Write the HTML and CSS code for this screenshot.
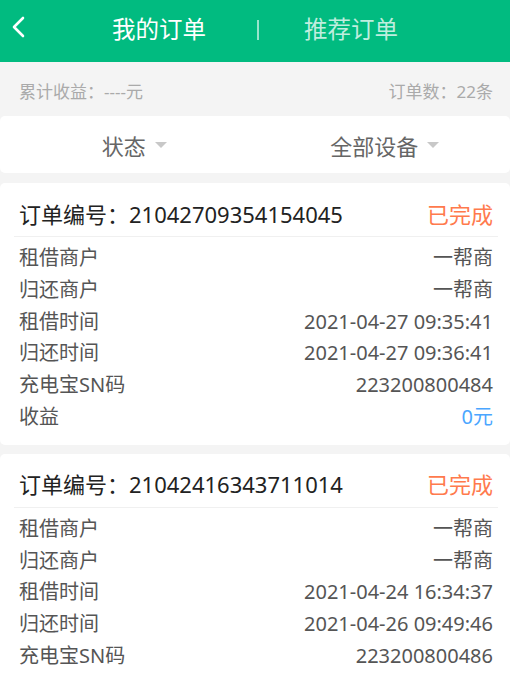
FILE: index.html
```html
<!DOCTYPE html>
<html lang="zh-CN">
<head>
    <meta charset="UTF-8">
    <meta name="viewport" content="width=device-width, initial-scale=1.0">
    <title>我的订单</title>
    <link rel="stylesheet" href="styles.css">
</head>
<body>
    <div class="header">
        <svg class="back" width="14" height="22" viewBox="0 0 14 22">
            <polyline points="11,2 2,11 11,20" fill="none" stroke="#fff" stroke-width="2.6" stroke-linecap="round" stroke-linejoin="round"/>
        </svg>
        <div class="tabs">
            <span class="tab active">我的订单</span>
            <span class="sep"></span>
            <span class="tab">推荐订单</span>
        </div>
    </div>

    <div class="stats">
        <span>累计收益：----元</span>
        <span>订单数：22条</span>
    </div>

    <div class="filters">
        <div class="filter">状态<i class="caret"></i></div>
        <div class="filter">全部设备<i class="caret"></i></div>
    </div>

    <div class="card">
        <div class="card-head">
            <span class="order-no">订单编号：21042709354154045</span>
            <span class="status">已完成</span>
        </div>
        <div class="rows">
            <div class="row"><span>租借商户</span><span>一帮商</span></div>
            <div class="row"><span>归还商户</span><span>一帮商</span></div>
            <div class="row"><span>租借时间</span><span>2021-04-27 09:35:41</span></div>
            <div class="row"><span>归还时间</span><span>2021-04-27 09:36:41</span></div>
            <div class="row"><span>充电宝SN码</span><span>223200800484</span></div>
            <div class="row"><span>收益</span><span class="income">0元</span></div>
        </div>
    </div>

    <div class="card">
        <div class="card-head">
            <span class="order-no">订单编号：21042416343711014</span>
            <span class="status">已完成</span>
        </div>
        <div class="rows">
            <div class="row"><span>租借商户</span><span>一帮商</span></div>
            <div class="row"><span>归还商户</span><span>一帮商</span></div>
            <div class="row"><span>租借时间</span><span>2021-04-24 16:34:37</span></div>
            <div class="row"><span>归还时间</span><span>2021-04-26 09:49:46</span></div>
            <div class="row"><span>充电宝SN码</span><span>223200800486</span></div>
        </div>
    </div>
</body>
</html>
```

FILE: styles.css
```css
body {
    margin: 0;
    background-color: #f4f4f4;
    font-family: "Noto Sans", "Noto Sans CJK SC", sans-serif;
    overflow: hidden;
}

.header {
    height: 62px;
    box-sizing: border-box;
    padding-bottom: 6px;
    background-color: #01bb80;
    display: flex;
    align-items: center;
    justify-content: center;
    position: relative;
}

.back {
    position: absolute;
    left: 12px;
    top: 16px;
}

.tabs {
    display: flex;
    align-items: center;
}

.tab {
    font-size: 23.5px;
    color: rgba(255, 255, 255, 0.75);
}

.tab.active {
    color: #fff;
}

.sep {
    width: 2px;
    height: 20px;
    margin: 4px 45px 0 51px;
    background-color: rgba(255, 255, 255, 0.6);
}

.stats {
    height: 54px;
    box-sizing: border-box;
    padding: 3px 17px 0 19px;
    display: flex;
    align-items: center;
    justify-content: space-between;
    font-size: 17px;
    color: #aaa;
}

.filters {
    height: 57px;
    box-sizing: border-box;
    padding-left: 9px;
    background-color: #fff;
    border-radius: 5px;
    display: flex;
    margin-bottom: 10px;
}

.filter {
    flex: 1;
    display: flex;
    align-items: center;
    justify-content: center;
    font-size: 22px;
    color: #666;
}

.caret {
    width: 0;
    height: 0;
    border-left: 6px solid transparent;
    border-right: 6px solid transparent;
    border-top: 6px solid #c8c8c8;
    margin-left: 9px;
}

.card {
    background-color: #fff;
    border-radius: 5px;
    padding: 0 12px 12px 14px;
    margin-bottom: 9px;
}

.card-head {
    height: 54px;
    display: flex;
    align-items: center;
    justify-content: space-between;
    padding: 6px 5px 0 5px;
    box-sizing: border-box;
    border-bottom: 1px solid #f0f0f0;
    font-size: 22px;
}

.order-no {
    color: #222;
}

.status {
    color: #ff7a4d;
}

.rows {
    padding: 5px 5px 0 5px;
}

.row {
    display: flex;
    justify-content: space-between;
    font-size: 20px;
    line-height: 31.8px;
    color: #555;
}

.income {
    color: #4aa6ff;
}
```
